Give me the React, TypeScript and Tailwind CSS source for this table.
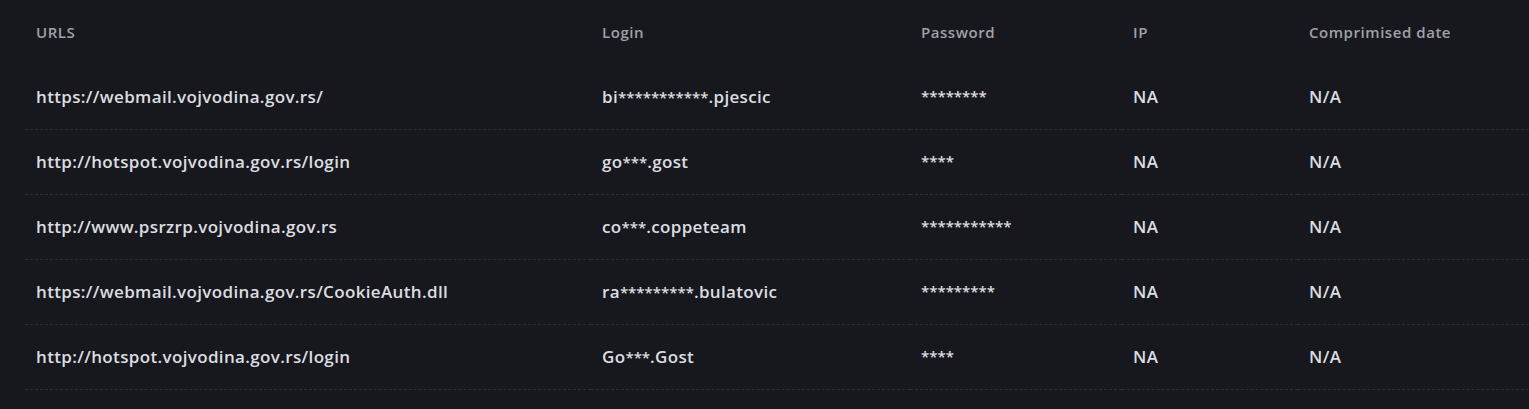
const rows = [
  { url: 'https://webmail.vojvodina.gov.rs/', login: 'bi***********.pjescic', password: '********' },
  { url: 'http://hotspot.vojvodina.gov.rs/login', login: 'go***.gost', password: '****' },
  { url: 'http://www.psrzrp.vojvodina.gov.rs', login: 'co***.coppeteam', password: '***********' },
  { url: 'https://webmail.vojvodina.gov.rs/CookieAuth.dll', login: 'ra*********.bulatovic', password: '*********' },
  { url: 'http://hotspot.vojvodina.gov.rs/login', login: 'Go***.Gost', password: '****' },
];

// asterisks in the masked login render a bit smaller than the letters
function Masked({ value }: { value: string }) {
  const parts = value.split(/(\*+)/);
  return (
    <>
      {parts.map((p, i) =>
        p.startsWith('*') ? (
          <span key={i} className="text-[15px] tracking-[0px]">
            {p}
          </span>
        ) : (
          <span key={i}>{p}</span>
        ),
      )}
    </>
  );
}

export default function App() {
  return (
    <main
      className="min-h-screen bg-[#17181e] pl-[25px]"
      style={{ fontFamily: '"Open Sans", "Noto Sans", sans-serif' }}
    >
      <table className="w-full table-fixed border-collapse text-left">
        <colgroup>
          <col className="w-[566px]" />
          <col className="w-[319px]" />
          <col className="w-[212px]" />
          <col className="w-[176px]" />
          <col />
        </colgroup>
        <thead>
          <tr className="h-[64px] text-[15px] font-semibold tracking-[0.55px] text-[#9fa1a8]">
            <th className="px-[11px] font-semibold">URLS</th>
            <th className="px-[11px] font-semibold">Login</th>
            <th className="px-[11px] font-semibold">Password</th>
            <th className="px-[11px] font-semibold">IP</th>
            <th className="px-[11px] font-semibold">Comprimised date</th>
          </tr>
        </thead>
        <tbody>
          {rows.map((r, i) => (
            <tr
              key={i}
              className="h-[65px] border-b border-dashed border-[#2a2c3a] text-[17px] font-semibold tracking-[0.35px] text-[#dcdde0]"
            >
              <td className="px-[11px]">{r.url}</td>
              <td className="px-[11px]">
                <Masked value={r.login} />
              </td>
              <td className="px-[11px] text-[15px] tracking-[0px]">{r.password}</td>
              <td className="px-[11px]">NA</td>
              <td className="px-[11px]">N/A</td>
            </tr>
          ))}
        </tbody>
      </table>
    </main>
  );
}
